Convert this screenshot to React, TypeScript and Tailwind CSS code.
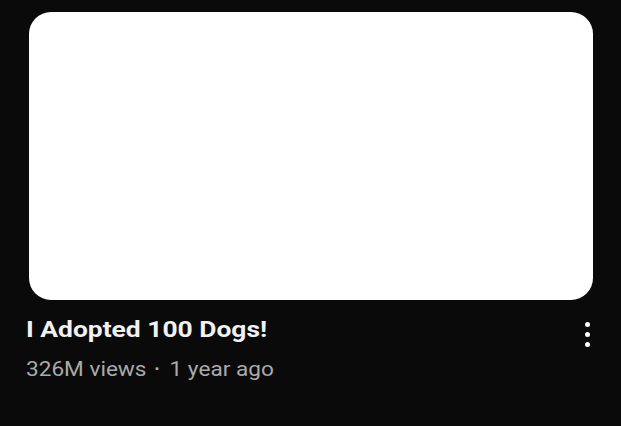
export default function App() {
  return (
    <div className="w-[621px] h-[426px] bg-[#0a0a0a] font-['Roboto','Liberation_Sans',sans-serif] overflow-hidden">
      <div className="pt-3 pl-[29px] pr-7">
        {/* Thumbnail */}
        <div className="w-[564px] h-[288px] rounded-[22px] bg-white" />

        {/* Details */}
        <div className="flex items-start mt-4 -ml-[3px]">
          <div className="flex-1 min-w-0">
            <h3 className="origin-left scale-x-[1.2] text-[22px] leading-[28px] font-bold text-[#f1f1f1] whitespace-nowrap">
              I Adopted 100 Dogs!
            </h3>
            <div className="mt-3 origin-left scale-x-[1.13] text-[20px] leading-[26px] text-[#aaaaaa] flex items-center whitespace-nowrap">
              <span>326M views</span>
              <span className="ml-[7px] mr-[9px] text-[13px]">•</span>
              <span>1 year ago</span>
            </div>
          </div>
          <button className="w-6 h-10 flex flex-col items-center justify-center gap-[5px] -mr-[6px] -mt-[2px]">
            <span className="w-[5px] h-[5px] rounded-full bg-white" />
            <span className="w-[5px] h-[5px] rounded-full bg-white" />
            <span className="w-[5px] h-[5px] rounded-full bg-white" />
          </button>
        </div>
      </div>
    </div>
  );
}
